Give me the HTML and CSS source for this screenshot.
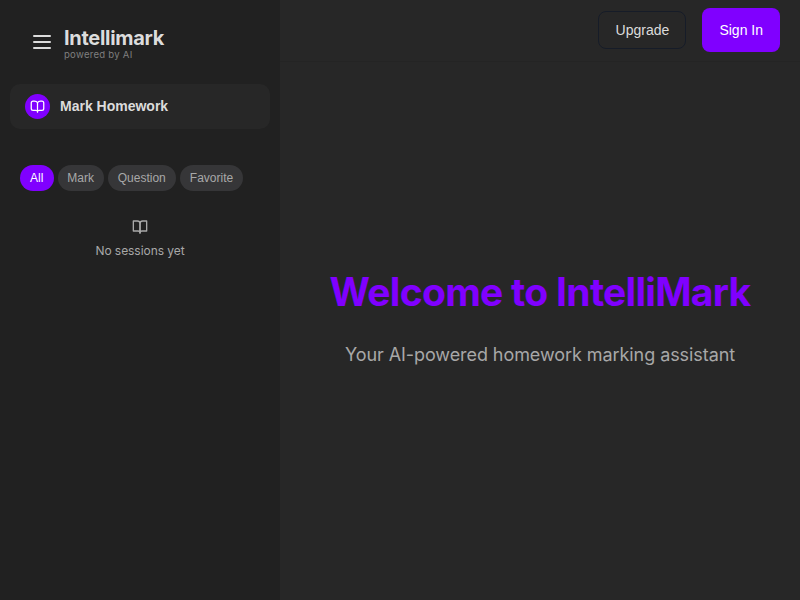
FILE: index.html
```html
<!DOCTYPE html>
<html lang="en">
<head>
<meta charset="utf-8">
<title>Intellimark</title>
<link rel="stylesheet" href="styles.css">
</head>
<body>
<div class="app">
  <aside class="sidebar">
    <div class="brand">
      <button class="menu" aria-label="Menu"><span></span><span></span><span></span></button>
      <div>
        <div class="brand-name">Intellimark</div>
        <div class="brand-sub">powered by AI</div>
      </div>
    </div>
    <button class="mark-btn">
      <span class="mark-icon"><svg width="15" height="15" viewBox="0 0 24 24"><path d="M12 6v15"/><path d="M12 6c-1-2-3-2.500-5-2.500H5a3 3 0 0 0-3 3V15a3 3 0 0 0 3 3h4.500c1.500 0 2.500.5 2.500 1.500 0-1 1-1.500 2.500-1.500H19a3 3 0 0 0 3-3V6.500a3 3 0 0 0-3-3h-2c-2 0-4 .5-5 2.500z"/></svg></span>
      <span class="mark-label">Mark Homework</span>
    </button>
    <div class="tabs">
      <button class="tab active">All</button>
      <button class="tab">Mark</button>
      <button class="tab">Question</button>
      <button class="tab">Favorite</button>
    </div>
    <div class="empty">
      <svg width="16" height="16" viewBox="0 0 24 24"><path d="M2 3h6a4 4 0 0 1 4 4v14a3 3 0 0 0-3-3H2z"/><path d="M22 3h-6a4 4 0 0 0-4 4v14a3 3 0 0 1 3-3h7z"/></svg>
      <span>No sessions yet</span>
    </div>
  </aside>
  <main class="main">
    <header class="header">
      <button class="upgrade">Upgrade</button>
      <button class="signin">Sign In</button>
    </header>
    <section class="welcome">
      <h1>Welcome to IntelliMark</h1>
      <p>Your AI-powered homework marking assistant</p>
    </section>
  </main>
</div>
</body>
</html>
```

FILE: styles.css
```css
* { box-sizing: border-box; }
body { margin: 0; background: #272727; font-family: Inter, sans-serif; color: #dcdcdc; }
button { font-family: "Liberation Sans", Arial, sans-serif; border: 0; margin: 0; padding: 0; background: none; color: inherit; white-space: nowrap; }
svg { display: block; fill: none; stroke: currentColor; stroke-width: 2; stroke-linecap: round; stroke-linejoin: round; }
.app { display: flex; height: 600px; overflow: hidden; }
.sidebar { width: 280px; flex: none; background: #212121; padding: 0 10px; }
.brand { display: flex; height: 84px; padding: 26px 0 0 23px; gap: 13px; }
.menu { display: flex; flex-direction: column; gap: 4px; width: 18px; padding-top: 9px; }
.menu span { width: 18px; height: 2px; border-radius: 1px; background: #dcdcdc; }
.brand-name { font-size: 20px; line-height: 24px; font-weight: 700; letter-spacing: -0.3px; }
.brand-sub { margin-top: -1px; font-size: 9.600px; line-height: 12px; letter-spacing: 0.25px; color: #7f7f7f; }
.mark-btn { display: flex; align-items: center; gap: 10px; width: 260px; height: 45px; padding: 0 15px; border-radius: 10px; background: #272727; font-size: 14px; font-weight: 700; }
.mark-icon { display: flex; align-items: center; justify-content: center; width: 25px; height: 25px; border-radius: 50%; background: #8000ff; color: #fff; }
.mark-label { padding-bottom: 2px; }
.tabs { display: flex; gap: 4px; padding: 36px 10px 0; }
.tab { height: 26px; padding: 0 10px; border-radius: 13px; background: #363638; color: #a8a8a8; font-size: 12px; }
.tab.active { width: 33.500px; background: #8000ff; color: #fff; }
.tab:nth-child(2) { padding: 0 9.800px; }
.empty { display: flex; flex-direction: column; align-items: center; gap: 8px; padding-top: 28px; color: #a8a8a8; font-size: 12px; line-height: 16px; letter-spacing: -0.05px; }
.main { flex: 1; display: flex; flex-direction: column; }
.header { display: flex; align-items: center; justify-content: flex-end; gap: 16px; height: 62px; padding: 0 20px 1px 0; border-bottom: 1px solid #242424; }
.header button { font-size: 14px; }
.upgrade { width: 88px; height: 38px; border: 1px solid #161c28; border-radius: 8px; }
.header .signin { width: 77.600px; height: 44px; border-radius: 8px; background: #8000ff; color: #fff; }
.welcome { padding-top: 206px; text-align: center; }
h1 { margin: 0; color: #8000ff; font-size: 39px; line-height: 48px; font-weight: 700; letter-spacing: -0.7px; white-space: nowrap; }
p { margin: 25px 0 0; color: #a8a8a8; font-size: 18px; line-height: 28px; letter-spacing: -0.07px; white-space: nowrap; }
```
